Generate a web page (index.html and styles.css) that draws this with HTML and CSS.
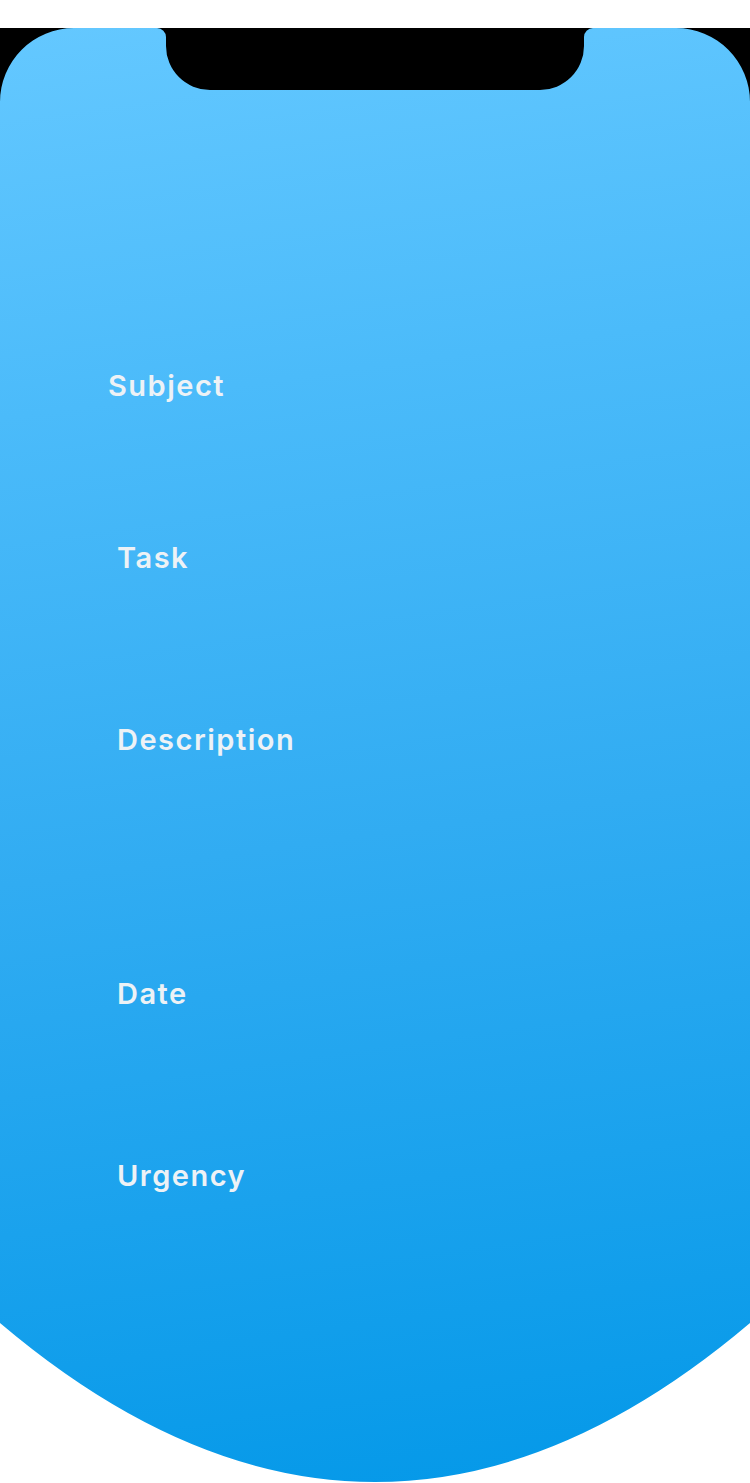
FILE: index.html
```html
<!DOCTYPE html>
<html lang="en">
<head>
<meta charset="utf-8">
<title>New Task</title>
<link rel="stylesheet" href="styles.css">
</head>
<body>
<div class="device">
  <main class="screen">
    <form class="task-form">
      <div class="field field--subject">
        <label class="field-label">Subject</label>
        <div class="field-control"></div>
      </div>
      <div class="field field--task">
        <label class="field-label">Task</label>
        <div class="field-control"></div>
      </div>
      <div class="field field--description">
        <label class="field-label">Description</label>
        <div class="field-control"></div>
      </div>
      <div class="field field--date">
        <label class="field-label">Date</label>
        <div class="field-control"></div>
      </div>
      <div class="field field--urgency">
        <label class="field-label">Urgency</label>
        <div class="field-control"></div>
      </div>
    </form>
  </main>
</div>
</body>
</html>
```

FILE: styles.css
```css
* { box-sizing: border-box; }

html, body {
  margin: 0;
  padding: 0;
  background: #ffffff;
}

body {
  font-family: Inter, "Open Sans", "Liberation Sans", sans-serif;
}

.device {
  margin-top: 28px;
  width: 750px;
  height: 1455px;
  background: linear-gradient(to bottom, #000000 0, #000000 110px, transparent 110px);
}

.screen {
  width: 750px;
  height: 1455px;
  background: linear-gradient(172deg, #64c8ff 0%, #4bbbfa 25%, #31acf2 55%, #0398e8 100%);
  clip-path: path('M0,74 A74,74 0 0 1 74,0 H157 A9,9 0 0 1 166,9 V18 A44,44 0 0 0 210,62 H540 A44,44 0 0 0 584,18 V9 A9,9 0 0 1 593,0 H676 A74,74 0 0 1 750,74 V1295 Q375,1613 0,1295 Z');
}

.task-form {
  display: flex;
  flex-direction: column;
  padding-top: 343px;
  padding-left: 117px;
}

.field {
  display: flex;
  flex-direction: column;
}

.field-label {
  font-size: 29px;
  line-height: 30px;
  font-weight: 600;
  color: #edf2f6;
  letter-spacing: 1.5px;
}

.field--subject { margin-left: -9px; }

.field--subject .field-control { height: 142px; }
.field--task .field-control { height: 152px; }
.field--description .field-control { height: 224px; }
.field--date .field-control { height: 152px; }
.field--urgency .field-control { height: 120px; }
```
